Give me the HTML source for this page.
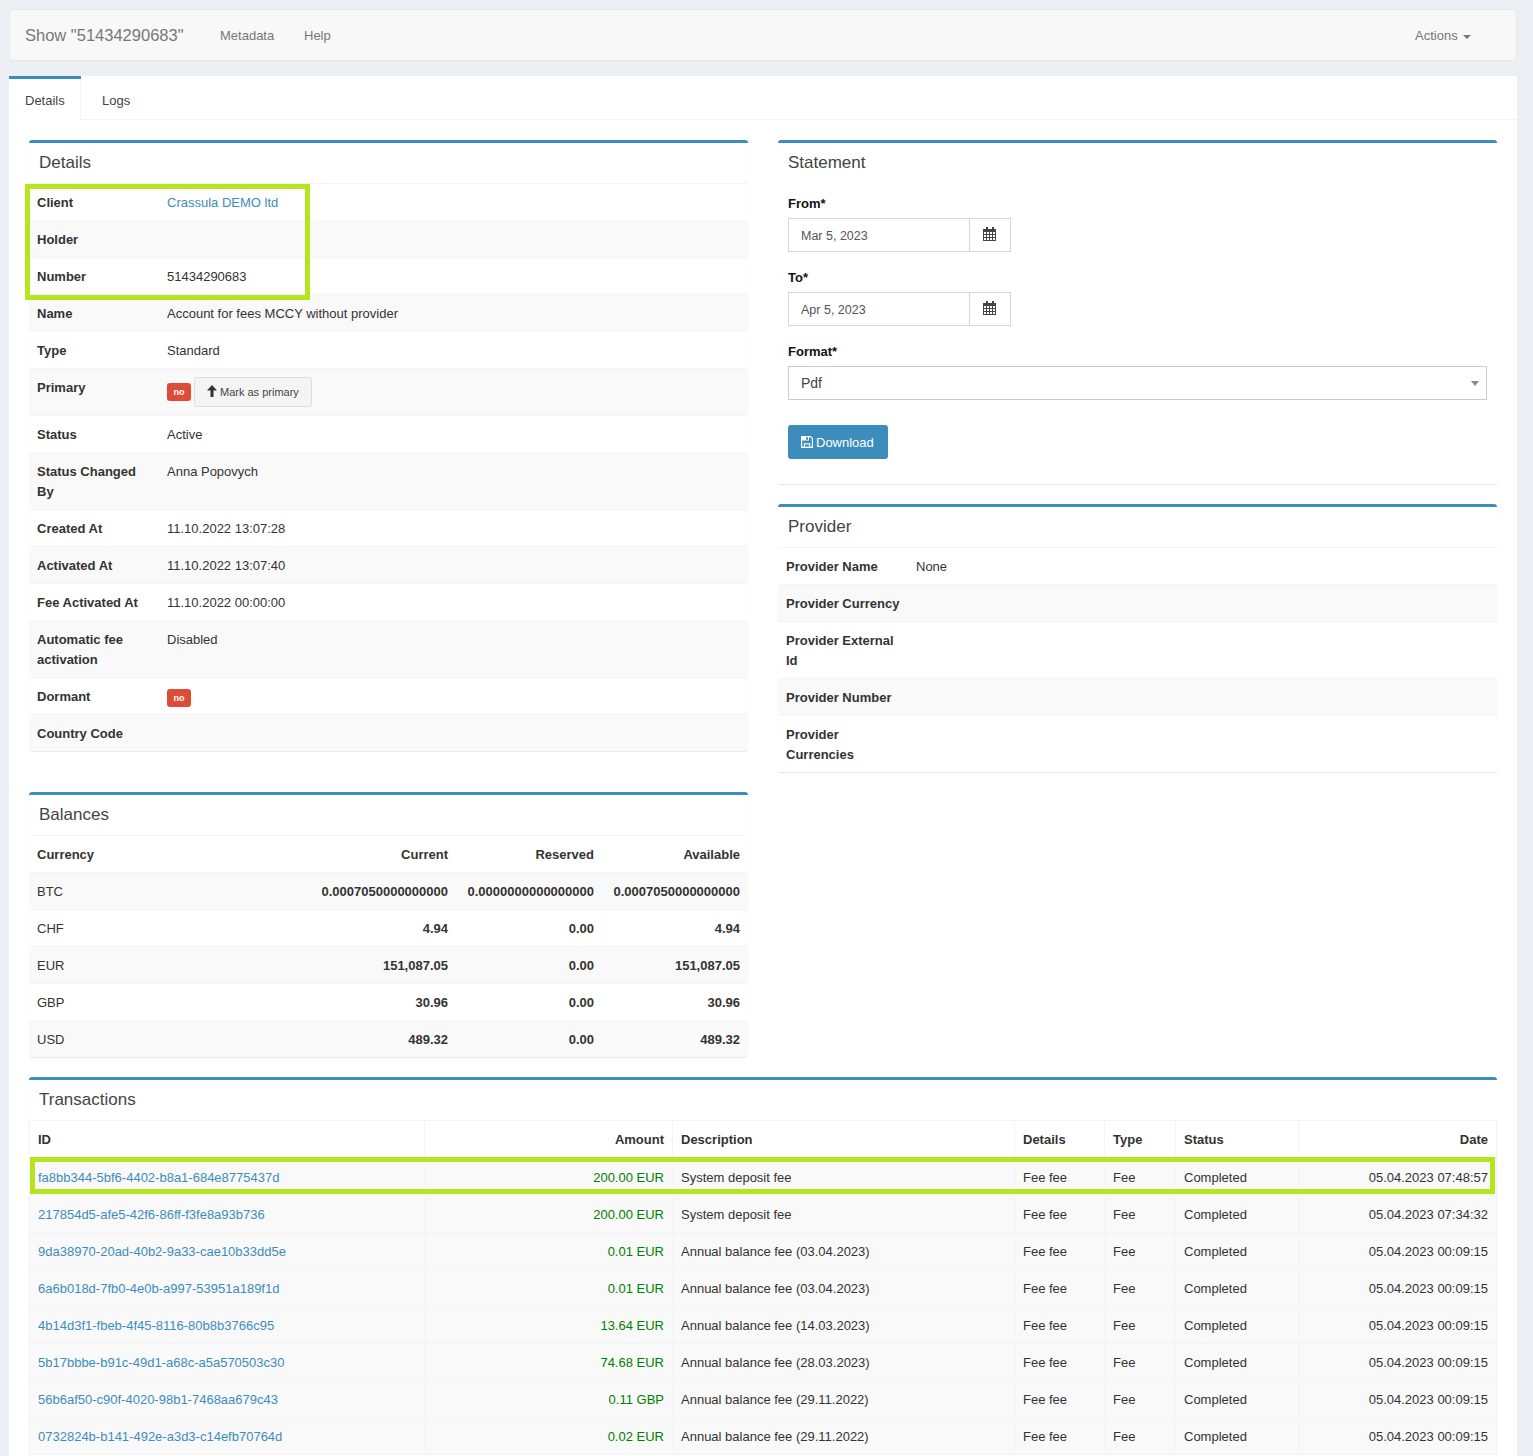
<!DOCTYPE html>
<html><head><meta charset="utf-8">
<style>
*{box-sizing:border-box;margin:0;padding:0}
html,body{width:1533px;height:1456px;overflow:hidden}
body{background:#ecf0f5;font-family:"Liberation Sans",sans-serif;font-size:13px;color:#333;position:relative}
.abs{position:absolute}
a{color:#3c8dbc;text-decoration:none}
.nav{left:9px;top:9px;width:1508px;height:52px;background:#f8f8f8;border:1px solid #e7e7e7;border-radius:4px}
.nav span{position:absolute;color:#777;white-space:nowrap}
.tabs{left:9px;top:76px;width:1508px;height:1400px;background:#fff;border-radius:3px 3px 0 0}
.tabhead{left:0;top:0;width:1508px;height:44px;border-bottom:1px solid #f4f4f4}
.tab-active{left:0;top:0;width:72px;height:44px;border-right:1px solid #f4f4f4;background:#fff}
.tab-bar{left:0;top:0;width:72px;height:3px;background:#3c8dbc}
.box{position:absolute;background:#fff;border-top:3px solid #3c8dbc;border-radius:3px;box-shadow:0 1px 1px rgba(0,0,0,.1)}
.box h3{position:absolute;left:10px;top:10px;font-size:17px;font-weight:normal;color:#444;line-height:20px;white-space:nowrap}
table{border-collapse:collapse;position:absolute;left:0;width:100%}
td,th{padding:9px 8px 7px;line-height:20px;vertical-align:top;text-align:left;border-top:1px solid #f4f4f4;white-space:nowrap}
th{font-weight:bold}
tr.s td,tr.s th{background:#f9f9f9}
.r{text-align:right}
.tb td,.tb th{border:1px solid #f4f4f4}
.tb tr:first-child th{border-bottom:2px solid #f4f4f4}
.tb tr.s td{background:#f9f9f9}
.green{color:#008000}
.lbl{display:inline-block;background:#dd4b39;color:#fff;font-weight:bold;font-size:9px;line-height:19px;height:18px;width:24px;text-align:center;border-radius:3px;vertical-align:top;margin-top:5px}
.btn{display:inline-block;background:#f4f4f4;border:1px solid #ddd;border-radius:3px;height:30px;line-height:28px;font-size:11px;color:#444;padding:0 12px 0 12px;vertical-align:top;margin-top:-1px;margin-left:3px}
.hl{position:absolute;border:5px solid #b5e61d}
.inp{position:absolute;border:1px solid #d2d6de;background:#fff;color:#555}
.flabel{position:absolute;font-weight:bold;color:#111;white-space:nowrap}
</style></head><body>

<div class="abs nav">
  <span style="left:15px;top:15px;font-size:16.5px;line-height:20px">Show "51434290683"</span>
  <span style="left:210px;top:18px;line-height:16px">Metadata</span>
  <span style="left:294px;top:18px;line-height:16px">Help</span>
  <span style="left:1405px;top:18px;line-height:16px">Actions</span>
  <svg class="abs" style="left:1453px;top:25px" width="8" height="4" viewBox="0 0 8 4"><path d="M0 0H8L4 4z" fill="#777"/></svg>
</div>

<div class="abs tabs">
  <div class="abs tabhead"></div>
  <div class="abs tab-active"></div><div class="abs tab-bar"></div>
  <span class="abs" style="left:16px;top:17px;color:#444;line-height:16px">Details</span>
  <span class="abs" style="left:93px;top:17px;color:#444;line-height:16px">Logs</span>
</div>

<!-- DETAILS BOX -->
<div class="box" style="left:29px;top:140px;width:719px;height:611px">
  <h3>Details</h3>
  <table style="top:40px">
    <tr><th style="width:130px">Client</th><td><a>Crassula DEMO ltd</a></td></tr>
    <tr class="s"><th>Holder</th><td></td></tr>
    <tr><th>Number</th><td>51434290683</td></tr>
    <tr class="s"><th>Name</th><td>Account for fees MCCY without provider</td></tr>
    <tr><th>Type</th><td>Standard</td></tr>
    <tr class="s"><th style="height:47px">Primary</th><td><span class="lbl">no</span><span class="btn"><svg style="vertical-align:top;margin-top:7px;margin-right:3px" width="10" height="12" viewBox="0 0 10 12"><path d="M5 0L10 5.5H6.5V12H3.5V5.5H0z" fill="#333"/></svg>Mark as primary</span></td></tr>
    <tr><th>Status</th><td>Active</td></tr>
    <tr class="s"><th>Status Changed<br>By</th><td>Anna Popovych</td></tr>
    <tr><th>Created At</th><td>11.10.2022 13:07:28</td></tr>
    <tr class="s"><th>Activated At</th><td>11.10.2022 13:07:40</td></tr>
    <tr><th>Fee Activated At</th><td>11.10.2022 00:00:00</td></tr>
    <tr class="s"><th>Automatic fee<br>activation</th><td>Disabled</td></tr>
    <tr><th>Dormant</th><td><span class="lbl" style="margin-top:2px">no</span></td></tr>
    <tr class="s"><th>Country Code</th><td></td></tr>
  </table>
</div>

<!-- STATEMENT BOX -->
<div class="box" style="left:778px;top:140px;width:719px;height:344px">
  <h3>Statement</h3>
  <div class="flabel" style="left:10px;top:53px;line-height:16px">From*</div>
  <div class="inp" style="left:10px;top:75px;width:223px;height:34px"><span class="abs" style="left:12px;top:9px;line-height:16px;font-size:12.5px">Mar 5, 2023</span><div class="abs" style="left:180px;top:0;width:1px;height:32px;background:#d2d6de"></div><svg class="abs" style="left:194px;top:8px" width="13" height="14" viewBox="0 0 13 14" shape-rendering="crispEdges"><g fill="#444"><rect x="0" y="2" width="13" height="3"/><rect x="3" y="0" width="2" height="3"/><rect x="9" y="0" width="2" height="3"/><rect x="0" y="5" width="1" height="9"/><rect x="3" y="5" width="1" height="9"/><rect x="6" y="5" width="1" height="9"/><rect x="9" y="5" width="1" height="9"/><rect x="12" y="5" width="1" height="9"/><rect x="0" y="7" width="13" height="1"/><rect x="0" y="10" width="13" height="1"/><rect x="0" y="13" width="13" height="1"/></g></svg></div>
  <div class="flabel" style="left:10px;top:127px;line-height:16px">To*</div>
  <div class="inp" style="left:10px;top:149px;width:223px;height:34px"><span class="abs" style="left:12px;top:9px;line-height:16px;font-size:12.5px">Apr 5, 2023</span><div class="abs" style="left:180px;top:0;width:1px;height:32px;background:#d2d6de"></div><svg class="abs" style="left:194px;top:8px" width="13" height="14" viewBox="0 0 13 14" shape-rendering="crispEdges"><g fill="#444"><rect x="0" y="2" width="13" height="3"/><rect x="3" y="0" width="2" height="3"/><rect x="9" y="0" width="2" height="3"/><rect x="0" y="5" width="1" height="9"/><rect x="3" y="5" width="1" height="9"/><rect x="6" y="5" width="1" height="9"/><rect x="9" y="5" width="1" height="9"/><rect x="12" y="5" width="1" height="9"/><rect x="0" y="7" width="13" height="1"/><rect x="0" y="10" width="13" height="1"/><rect x="0" y="13" width="13" height="1"/></g></svg></div>
  <div class="flabel" style="left:10px;top:201px;line-height:16px">Format*</div>
  <div class="inp" style="left:10px;top:223px;width:699px;height:34px;border-color:#ccc"><span class="abs" style="left:12px;top:8px;line-height:16px;color:#444;font-size:14px">Pdf</span><svg class="abs" style="left:682px;top:14px" width="8" height="5" viewBox="0 0 8 5"><path d="M0 0H8L4 5z" fill="#888"/></svg></div>
  <div class="abs" style="left:10px;top:282px;width:100px;height:34px;background:#3c8dbc;border-radius:3px;color:#fff"><span class="abs" style="left:28px;top:10px;line-height:16px">Download</span><svg class="abs" style="left:13px;top:11px" width="12" height="12" viewBox="0 0 12 12"><path d="M0.6 0.6H9.5L11.4 2.5V11.4H0.6Z" fill="none" stroke="#fff" stroke-width="1.2"/><rect x="0.6" y="0.6" width="7.4" height="3.9" fill="#fff"/><rect x="5.2" y="1.2" width="1.8" height="2.6" fill="#3c8dbc"/><rect x="3.4" y="7.8" width="5.2" height="3.6" fill="none" stroke="#fff" stroke-width="1.1"/></svg></div>
</div>

<!-- PROVIDER BOX -->
<div class="box" style="left:778px;top:504px;width:719px;height:268px">
  <h3>Provider</h3>
  <table style="top:40px">
    <tr><th style="width:130px">Provider Name</th><td>None</td></tr>
    <tr class="s"><th>Provider Currency</th><td></td></tr>
    <tr><th>Provider External<br>Id</th><td></td></tr>
    <tr class="s"><th>Provider Number</th><td></td></tr>
    <tr><th>Provider<br>Currencies</th><td></td></tr>
  </table>
</div>

<!-- BALANCES BOX -->
<div class="box" style="left:29px;top:792px;width:719px;height:265px">
  <h3>Balances</h3>
  <table style="top:40px">
    <tr><th>Currency</th><th class="r" style="width:146px">Current</th><th class="r" style="width:146px">Reserved</th><th class="r" style="width:146px">Available</th></tr>
    <tr class="s"><td>BTC</td><th class="r">0.0007050000000000</th><th class="r">0.0000000000000000</th><th class="r">0.0007050000000000</th></tr>
    <tr><td>CHF</td><th class="r">4.94</th><th class="r">0.00</th><th class="r">4.94</th></tr>
    <tr class="s"><td>EUR</td><th class="r">151,087.05</th><th class="r">0.00</th><th class="r">151,087.05</th></tr>
    <tr><td>GBP</td><th class="r">30.96</th><th class="r">0.00</th><th class="r">30.96</th></tr>
    <tr class="s"><td>USD</td><th class="r">489.32</th><th class="r">0.00</th><th class="r">489.32</th></tr>
  </table>
</div>

<!-- TRANSACTIONS BOX -->
<div class="box" style="left:29px;top:1077px;width:1468px;height:400px">
  <h3>Transactions</h3>
  <table class="tb" style="top:40px">
    <tr><th style="width:395px">ID</th><th class="r" style="width:248px">Amount</th><th style="width:342px">Description</th><th style="width:90px">Details</th><th style="width:71px">Type</th><th style="width:123px">Status</th><th class="r">Date</th></tr>
<tr class="s"><td><a>fa8bb344-5bf6-4402-b8a1-684e8775437d</a></td><td class="r green">200.00 EUR</td><td>System deposit fee</td><td>Fee fee</td><td>Fee</td><td>Completed</td><td class="r">05.04.2023 07:48:57</td></tr>
<tr class="s"><td><a>217854d5-afe5-42f6-86ff-f3fe8a93b736</a></td><td class="r green">200.00 EUR</td><td>System deposit fee</td><td>Fee fee</td><td>Fee</td><td>Completed</td><td class="r">05.04.2023 07:34:32</td></tr>
<tr class="s"><td><a>9da38970-20ad-40b2-9a33-cae10b33dd5e</a></td><td class="r green">0.01 EUR</td><td>Annual balance fee (03.04.2023)</td><td>Fee fee</td><td>Fee</td><td>Completed</td><td class="r">05.04.2023 00:09:15</td></tr>
<tr class="s"><td><a>6a6b018d-7fb0-4e0b-a997-53951a189f1d</a></td><td class="r green">0.01 EUR</td><td>Annual balance fee (03.04.2023)</td><td>Fee fee</td><td>Fee</td><td>Completed</td><td class="r">05.04.2023 00:09:15</td></tr>
<tr class="s"><td><a>4b14d3f1-fbeb-4f45-8116-80b8b3766c95</a></td><td class="r green">13.64 EUR</td><td>Annual balance fee (14.03.2023)</td><td>Fee fee</td><td>Fee</td><td>Completed</td><td class="r">05.04.2023 00:09:15</td></tr>
<tr class="s"><td><a>5b17bbbe-b91c-49d1-a68c-a5a570503c30</a></td><td class="r green">74.68 EUR</td><td>Annual balance fee (28.03.2023)</td><td>Fee fee</td><td>Fee</td><td>Completed</td><td class="r">05.04.2023 00:09:15</td></tr>
<tr class="s"><td><a>56b6af50-c90f-4020-98b1-7468aa679c43</a></td><td class="r green">0.11 GBP</td><td>Annual balance fee (29.11.2022)</td><td>Fee fee</td><td>Fee</td><td>Completed</td><td class="r">05.04.2023 00:09:15</td></tr>
<tr class="s"><td><a>0732824b-b141-492e-a3d3-c14efb70764d</a></td><td class="r green">0.02 EUR</td><td>Annual balance fee (29.11.2022)</td><td>Fee fee</td><td>Fee</td><td>Completed</td><td class="r">05.04.2023 00:09:15</td></tr>
  </table>
</div>
<div class="hl" style="left:25px;top:184px;width:285px;height:116px"></div>
<div class="hl" style="left:30px;top:1157px;width:1465px;height:37px"></div>

</body></html>
